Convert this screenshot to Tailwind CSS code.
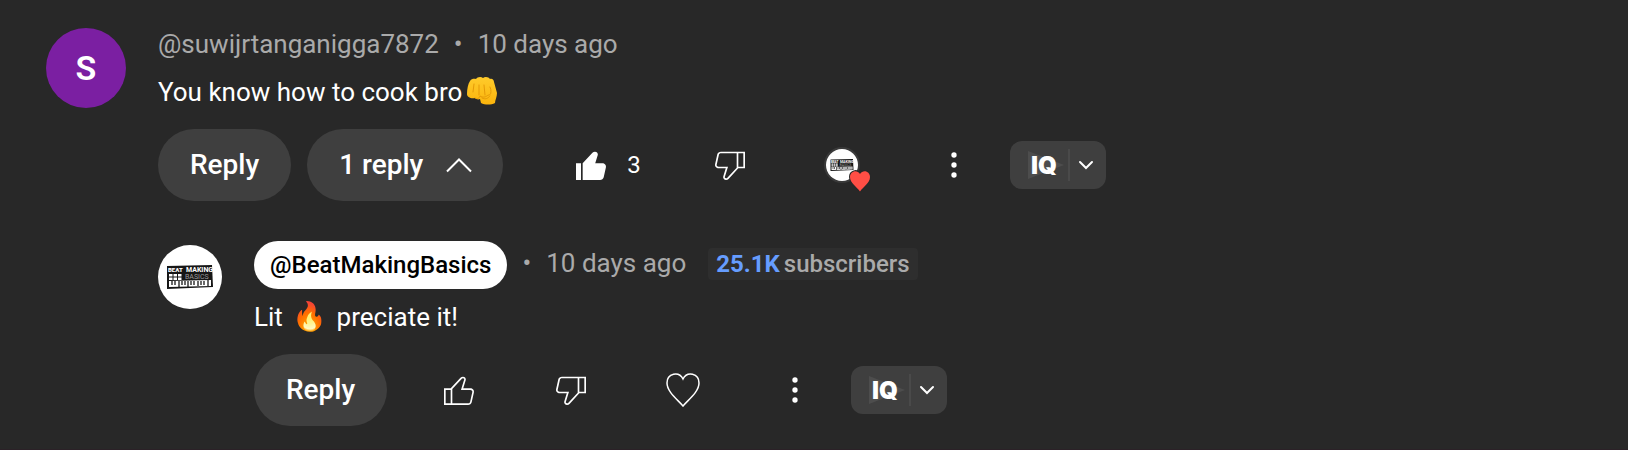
<!DOCTYPE html>
<html lang="en">
<head>
  <meta charset="UTF-8" />
  <meta name="viewport" content="width=device-width, initial-scale=1.0"/>
  <title>Comments</title>
  <script src="https://cdn.jsdelivr.net/npm/@tailwindcss/browser@4"></script>
</head>
<body class="bg-[#282828] min-h-screen border-b border-[#2b2127] text-white font-[Roboto,'Noto_Color_Emoji',sans-serif] text-[26px]">

  <!-- Shared icons -->
  <svg class="hidden" aria-hidden="true">
    <symbol id="like" viewBox="0 0 24 24">
      <path d="M18.77,11h-4.23l1.52-4.94C16.38,5.03,15.54,4,14.38,4c-0.58,0-1.14,0.24-1.52,0.65L7,11H3v10h4h1h9.43c1.06,0,1.98-0.67,2.19-1.61l1.34-6C21.23,12.15,20.18,11,18.77,11z M7,20H4v-8h3V20z M19.98,13.17l-1.34,6C18.54,19.65,18.03,20,17.43,20H8v-8.61l5.6-6.06C13.79,5.12,14.08,5,14.38,5c0.26,0,0.5,0.11,0.63,0.3c0.07,0.1,0.15,0.26,0.09,0.47l-1.52,4.94L13.18,12h1.35h4.23c0.41,0,0.8,0.17,1.03,0.46C19.92,12.61,20.05,12.86,19.98,13.17z"/>
    </symbol>
    <symbol id="liked" viewBox="0 0 24 24">
      <path d="M3,11h3v10H3V11z M18.77,11h-4.23l1.52-4.94C16.38,5.03,15.54,4,14.38,4c-0.58,0-1.14,0.24-1.52,0.65L7,11v10h10.43c1.06,0,1.98-0.67,2.19-1.61l1.34-6C21.23,12.15,20.18,11,18.77,11z"/>
    </symbol>
    <symbol id="dislike" viewBox="0 0 24 24">
      <path d="M17,4h-1H6.57C5.5,4,4.59,4.67,4.38,5.61l-1.34,6C2.77,12.85,3.82,14,5.23,14h4.23l-1.52,4.94C7.62,19.97,8.46,21,9.62,21c0.58,0,1.14-0.24,1.52-0.65L17,14h4V4H17z M10.4,19.67C10.21,19.88,9.92,20,9.62,20c-0.26,0-0.5-0.11-0.63-0.3c-0.07-0.1-0.15-0.26-0.09-0.47l1.52-4.94l0.4-1.29H9.46H5.23c-0.41,0-0.8-0.17-1.03-0.46c-0.12-0.15-0.25-0.4-0.18-0.72l1.34-6C5.46,5.35,5.97,5,6.57,5H16v8.61L10.4,19.67z M20,13h-3V5h3V13z"/>
    </symbol>
    <symbol id="dots" viewBox="0 0 24 24">
      <circle cx="12" cy="6" r="1.6"/><circle cx="12" cy="12" r="1.6"/><circle cx="12" cy="18" r="1.6"/>
    </symbol>
    <symbol id="channel" viewBox="0 0 64 64">
      <rect width="64" height="64" fill="#fff"/>
      <path d="M9 21 L54 20 L55 42 L9 44Z" fill="#161616"/>
      <path d="M11 29h3.500v2.500h-3.500zM15.500 29h3.500v2.500h-3.500zM20 29h3.500v2.500h-3.500zM11 32.500h3.500v2.500h-3.500zM15.500 32.500h3.500v2.500h-3.500zM20 32.500h3.500v2.500h-3.500z" fill="#fff"/>
      <path d="M11 36 L53 35 V41 L11 42Z" fill="#fff"/>
      <path d="M14 36v4M17 36v4M21 36v6M24 36v4M27 36v4M30 36v6M33 36v4M36 36v4M40 36v5M43 36v4M46 36v4M50 35v6" stroke="#161616" stroke-width="1.300"/>
      <text x="10" y="27" font-family="Roboto" font-weight="900" font-size="6" fill="#fff">BEAT</text>
      <text x="28" y="27" font-family="Roboto" font-weight="700" font-size="7" fill="#fff">MAKING</text>
      <text x="27" y="34" font-family="Roboto" font-weight="400" font-size="7" fill="#999">BASICS</text>
    </symbol>
  </svg>

  <main class="pt-[26px] pl-[46px] pr-6">
    <article class="flex gap-8">
      <div class="mt-0.5 size-20 shrink-0 rounded-full bg-[#7b1fa2] flex items-center justify-center text-[34px] font-semibold">S</div>

      <div class="flex-1">
        <div class="flex gap-[15px] leading-9 text-[#aaa]">
          <a href="#">@suwijrtanganigga7872</a>
          <span>•</span>
          <a href="#">10 days ago</a>
        </div>
        <p class="mt-2.5 h-10 leading-10 flex items-center">
          You know how to cook bro
          <svg class="ml-1 size-8" viewBox="0 0 32 32" role="img" aria-label="👊">
            <defs>
              <linearGradient id="skin" x1="0" y1="0" x2="0" y2="1">
                <stop offset="0" stop-color="#ffcb2b"/><stop offset="1" stop-color="#fbb40c"/>
              </linearGradient>
            </defs>
            <path d="M4 5 C6 2 9 3 10 3 C11 1 15 0 17 2 C19 0 23 1 24 3 C26 2 28 4 28 6 L31 17 C31 21 29 24 29 27 C25 29 19 29 15 27 L14 23 C12 24 10 23 9 22 C5 23 1 21 1 18 C1 13 2 8 4 5Z" fill="url(#skin)"/>
            <path d="M8 8 L7 16 M13 9 L13 19 M18 9 L19 19 M9 22 C11 23 13 23 14 20 C17 22 20 21 22 19 C25 20 26 15 24 11 M16 22 C20 24 22 22 24 20" fill="none" stroke="#e59a08" stroke-width="1" stroke-linecap="round"/>
          </svg>
        </p>

        <div class="mt-[17px] flex items-center">
          <button class="h-18 px-8 rounded-full bg-[#3f3f3f] text-[28px] font-medium">Reply</button>
          <button class="ml-4 h-18 pl-8 pr-6 rounded-full bg-[#3f3f3f] text-[28px] font-medium flex items-center gap-4">
            1 reply
            <svg class="size-10" viewBox="0 0 40 40" fill="none" stroke="currentColor" stroke-width="2"><path d="M8 26.500 20 14.500 32 26.500"/></svg>
          </button>
          <button class="ml-13 p-4" aria-label="Like"><svg class="size-10 fill-white"><use href="#liked"/></svg></button>
          <span class="w-[27px] text-2xl">3</span>
          <button class="ml-10 p-4" aria-label="Dislike"><svg class="size-10 fill-white"><use href="#dislike"/></svg></button>
          <button class="ml-10 size-18 relative flex items-center justify-center" aria-label="Hearted by creator">
            <svg class="size-8 rounded-full ring-2 ring-[#3a3a3a]"><use href="#channel"/></svg>
            <svg class="absolute left-[42px] top-10 size-6" viewBox="0 0 24 24"><path d="M12 22.500 C9 18 2 14 2 8 C2 2 9 0 12 5 C15 0 22 2 22 8 C22 14 15 18 12 22.500Z" fill="#ff4e45" stroke="#282828" stroke-width="2" paint-order="stroke"/></svg>
          </button>
          <button class="ml-10 p-4" aria-label="More"><svg class="size-10 fill-white"><use href="#dots"/></svg></button>
          <button class="ml-5 w-24 h-12 rounded-xl bg-[#3f3f3f]" aria-label="IQ menu">
            <svg class="w-24 h-12" viewBox="0 0 96 48">
              <path d="M18 10 54 24 18 38Z" fill="#4d4d4d"/>
              <text x="21" y="33" font-family="Inter" font-weight="900" font-size="24" fill="#fff">IQ</text>
              <path d="M59 8V40" stroke="#4a4a4a" stroke-width="2"/>
              <path d="M70 21 76 27 82 21" fill="none" stroke="#fff" stroke-width="2" stroke-linecap="round"/>
            </svg>
          </button>
        </div>

        <article class="mt-10 flex gap-8">
          <svg class="mt-1 size-16 shrink-0 rounded-full"><use href="#channel"/></svg>

          <div class="flex-1">
            <div class="flex items-center text-[#aaa]">
              <a href="#" class="h-12 px-4 rounded-full bg-white text-black text-2xl leading-12 font-medium">@BeatMakingBasics</a>
              <span class="ml-[15px] mb-1">•</span>
              <a href="#" class="ml-[15px] mb-1">10 days ago</a>
              <span class="ml-[22px] mb-0.5 h-8 px-2 rounded bg-[#2e2e2e] flex items-center gap-1 text-2xl font-medium"><b class="font-bold text-[#669dff]">25.1K</b>subscribers</span>
            </div>
            <p class="mt-2 h-10 leading-10">Lit <span class="mx-[3px] text-[28px] leading-none">🔥</span> preciate it!</p>

            <div class="mt-[17px] flex items-center">
              <button class="h-18 px-8 rounded-full bg-[#3f3f3f] text-[28px] font-medium">Reply</button>
              <button class="ml-9 p-4" aria-label="Like"><svg class="size-10 fill-white"><use href="#like"/></svg></button>
              <button class="ml-10 p-4" aria-label="Dislike"><svg class="size-10 fill-white"><use href="#dislike"/></svg></button>
              <button class="ml-10 p-4" aria-label="Heart">
                <svg class="size-10" viewBox="0 0 40 40" fill="none" stroke="currentColor" stroke-width="1.500"><path d="M20 36 C15 30 4 22 4 13 C4 3 16 1 20 9 C24 1 36 3 36 13 C36 22 25 30 20 36Z"/></svg>
              </button>
              <button class="ml-10 p-4" aria-label="More"><svg class="size-10 fill-white"><use href="#dots"/></svg></button>
              <button class="ml-5 w-24 h-12 rounded-xl bg-[#3f3f3f]" aria-label="IQ menu">
                <svg class="w-24 h-12" viewBox="0 0 96 48">
                  <path d="M18 10 54 24 18 38Z" fill="#4d4d4d"/>
                  <text x="21" y="33" font-family="Inter" font-weight="900" font-size="24" fill="#fff">IQ</text>
                  <path d="M59 8V40" stroke="#4a4a4a" stroke-width="2"/>
                  <path d="M70 21 76 27 82 21" fill="none" stroke="#fff" stroke-width="2" stroke-linecap="round"/>
                </svg>
              </button>
            </div>
          </div>
        </article>
      </div>
    </article>
  </main>

</body>
</html>
